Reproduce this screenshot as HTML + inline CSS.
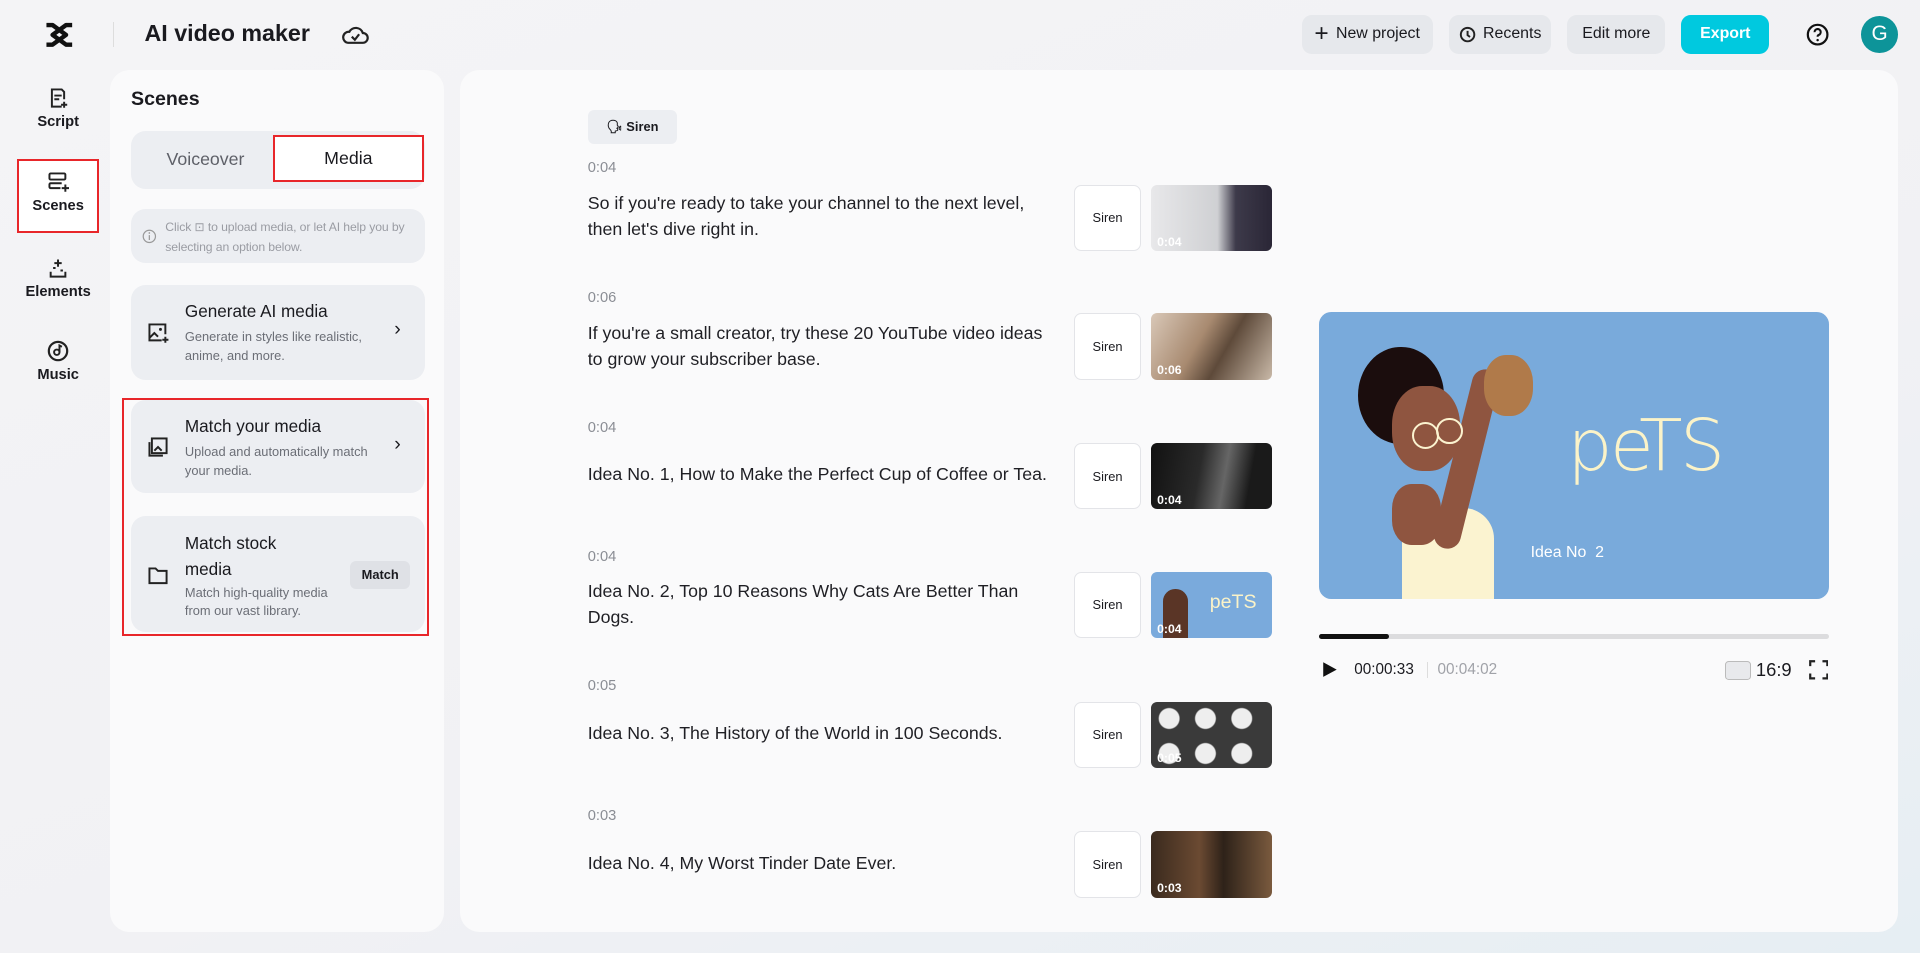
<!DOCTYPE html>
<html><head><meta charset="utf-8"><style>
*{box-sizing:border-box;margin:0;padding:0}
html,body{width:1920px;height:953px;overflow:hidden}
body{font-family:"Liberation Sans",sans-serif;background:linear-gradient(160deg,#f4f4f6 0%,#f1f1f4 60%,#e6eef3 100%);color:#1a1a1f}
#w{zoom:1.22449;width:1568px;height:778px;position:relative}
.a{position:absolute}
.btn{position:absolute;top:12px;height:32px;border-radius:8px;background:#e6e8ec;font-size:13px;display:flex;align-items:center;justify-content:center;gap:6px;color:#1a1a1f}
.nav{position:absolute;left:14px;width:67px;text-align:center;font-size:12px;font-weight:bold}
.nav svg{display:block;margin:0 auto 4px}
.card{position:absolute;left:107px;width:240px;background:#eceef2;border-radius:12px}
.ct{position:absolute;left:44px;font-size:14px;color:#1a1a1f}
.cs{position:absolute;left:44px;font-size:10.5px;color:#6b6e76;line-height:15px}
.time{position:absolute;left:480px;font-size:12px;color:#8a8d94}
.txt{position:absolute;left:480px;font-size:14.5px;line-height:21px;color:#1f1f24;width:380px}
.sir{position:absolute;left:877px;width:55px;height:54px;border:1px solid #e3e4e8;border-radius:6px;background:#fff;font-size:10.5px;display:flex;align-items:center;justify-content:center}
.th{position:absolute;left:940px;width:99px;height:54px;border-radius:5px;overflow:hidden}
.th span{position:absolute;left:5px;bottom:2px;color:#fff;font-size:10px;font-weight:bold}
</style></head><body><div id="w">
<!-- header -->
<svg class="a" style="left:36px;top:18px" width="25" height="21" viewBox="0 0 25 21"><path d="M2 2.5h5l11 8 -11 8H2M23 2.5h-5L7 10.5l11 8h5" fill="none" stroke="#111" stroke-width="3.6" stroke-linejoin="round"/></svg>
<div class="a" style="left:92px;top:18px;width:1px;height:20px;background:#ddd"></div>
<div class="a" style="left:118px;top:16px;font-size:19px;font-weight:bold">AI video maker</div>
<svg class="a" style="left:279px;top:18px" width="22" height="20" viewBox="0 0 22 20"><path d="M5 17h12a4 4 0 0 0 0-8 6 6 0 0 0-11-1 4.5 4.5 0 0 0-1 9z" fill="none" stroke="#222" stroke-width="1.8"/><path d="M8 12l2.5 2.5L14 10" fill="none" stroke="#222" stroke-width="1.8"/></svg>
<div class="btn" style="left:1063px;width:107px"><span style="font-size:20px">+</span>New project</div>
<div class="btn" style="left:1183px;width:84px"><svg width="14" height="14" viewBox="0 0 14 14"><circle cx="7" cy="7" r="5.5" fill="none" stroke="#222" stroke-width="1.6"/><path d="M7 4v3.5l2 1.5" fill="none" stroke="#222" stroke-width="1.6"/></svg>Recents</div>
<div class="btn" style="left:1280px;width:80px">Edit more</div>
<div class="btn" style="left:1373px;width:72px;background:#00c9df;color:#fff;font-weight:bold">Export</div>
<svg class="a" style="left:1475px;top:19px" width="19" height="19" viewBox="0 0 19 19"><circle cx="9.5" cy="9.5" r="8" fill="none" stroke="#111" stroke-width="1.8"/><path d="M7 7.5a2.5 2.5 0 1 1 3.3 2.3c-.6.3-.8.7-.8 1.4" fill="none" stroke="#111" stroke-width="1.7"/><circle cx="9.5" cy="14" r="1" fill="#111"/></svg>
<div class="a" style="left:1520px;top:13px;width:30px;height:30px;border-radius:50%;background:#0d9499;color:#fff;font-size:17px;display:flex;align-items:center;justify-content:center">G</div>
<!-- left nav -->
<div class="nav" style="top:71px"><svg width="18" height="18" viewBox="0 0 18 18"><path d="M12 16H4V2h8l2 2v6M6 7h6M6 10h4" fill="none" stroke="#222" stroke-width="1.6"/><path d="M14 12v5M11.5 14.5h5" stroke="#222" stroke-width="1.6"/></svg>Script</div>
<div class="a" style="left:14px;top:130px;width:67px;height:60px;border:2px solid #e8262a;background:#fff"></div>
<div class="nav" style="top:140px"><svg width="18" height="18" viewBox="0 0 18 18"><rect x="2" y="2" width="13" height="5" rx="1" fill="none" stroke="#222" stroke-width="1.6"/><path d="M11 14H3a1 1 0 0 1-1-1v-2a1 1 0 0 1 1-1h9M15 11v6M12 14h6" fill="none" stroke="#222" stroke-width="1.6"/></svg>Scenes</div>
<div class="nav" style="top:210px"><svg width="18" height="18" viewBox="0 0 18 18"><path d="M3 12v4h12v-4M9 2v6M6 5h6M5 9h2M11 11h2" fill="none" stroke="#222" stroke-width="1.6"/></svg>Elements</div>
<div class="nav" style="top:278px"><svg width="18" height="18" viewBox="0 0 18 18"><circle cx="9" cy="9" r="7.5" fill="none" stroke="#222" stroke-width="1.8"/><circle cx="8" cy="10" r="2.2" fill="none" stroke="#222" stroke-width="1.6"/><path d="M10.2 10V4.5l2 1" fill="none" stroke="#222" stroke-width="1.6"/></svg>Music</div>
<!-- scenes panel -->
<div class="a" style="left:90px;top:57px;width:273px;height:704px;background:#fafafb;border-radius:16px"></div>
<div class="a" style="left:107px;top:72px;font-size:16px;font-weight:bold">Scenes</div>
<div class="a" style="left:107px;top:107px;width:240px;height:47px;background:#eceef2;border-radius:12px"></div>
<div class="a" style="left:136px;top:122px;font-size:14.5px;color:#5e6068">Voiceover</div>
<div class="a" style="left:223px;top:110px;width:123px;height:39px;background:#fff;border:2px solid #e8262a;font-size:14.5px;display:flex;align-items:center;justify-content:center">Media</div>
<div class="card" style="top:171px;height:44px"></div>
<svg class="a" style="left:116px;top:187px" width="12" height="12" viewBox="0 0 12 12"><circle cx="6" cy="6" r="5" fill="none" stroke="#999" stroke-width="1"/><path d="M6 5v4" stroke="#999"/><circle cx="6" cy="3.3" r=".7" fill="#999"/></svg>
<div class="a" style="left:135px;top:178px;font-size:10px;color:#9a9ca3;line-height:16px;width:212px;letter-spacing:-0.1px">Click ⊡ to upload media, or let AI help you by selecting an option below.</div>
<div class="card" style="top:233px;height:77px"><svg class="a" style="left:13px;top:30px" width="18" height="18" viewBox="0 0 18 18"><path d="M12 15H2V2h13v8" fill="none" stroke="#222" stroke-width="1.6"/><path d="M2 13l4-4 3 3" fill="none" stroke="#222" stroke-width="1.6"/><circle cx="11" cy="6" r="1.2" fill="#222"/><path d="M15 12v5M12.5 14.5h5" stroke="#222" stroke-width="1.6"/></svg><div class="ct" style="top:13px">Generate AI media</div><div class="cs" style="top:35px">Generate in styles like realistic,<br>anime, and more.</div><div class="a" style="left:215px;top:27px;font-size:16px">›</div></div>
<div class="card" style="top:327px;height:76px"><svg class="a" style="left:13px;top:29px" width="18" height="18" viewBox="0 0 18 18"><rect x="4" y="2" width="12" height="12" fill="none" stroke="#222" stroke-width="1.6"/><path d="M2 5v11h11M6 12l3-3 3 3" fill="none" stroke="#222" stroke-width="1.6"/></svg><div class="ct" style="top:13px">Match your media</div><div class="cs" style="top:35px">Upload and automatically match<br>your media.</div><div class="a" style="left:215px;top:27px;font-size:16px">›</div></div>
<div class="card" style="top:421px;height:95px"><svg class="a" style="left:13px;top:41px" width="18" height="16" viewBox="0 0 18 16"><path d="M2 2h5l2 2h7v10H2z" fill="none" stroke="#222" stroke-width="1.6"/></svg><div class="ct" style="top:13px;line-height:21px">Match stock<br>media</div><div class="cs" style="top:56px">Match high-quality media<br>from our vast library.</div><div class="a" style="left:179px;top:37px;width:49px;height:23px;background:#dfe1e6;border-radius:5px;font-size:10.5px;font-weight:bold;display:flex;align-items:center;justify-content:center">Match</div></div>
<div class="a" style="left:100px;top:325px;width:250px;height:194px;border:2px solid #e8262a"></div>
<!-- main -->
<div class="a" style="left:376px;top:57px;width:1174px;height:704px;background:#fafafb;border-radius:16px"></div>
<div class="a" style="left:480px;top:90px;width:73px;height:28px;background:#eceef2;border-radius:5px;font-size:10.5px;font-weight:bold;display:flex;align-items:center;justify-content:center;gap:3px">🗣︎ Siren</div>

<div class="time" style="top:131px">0:04</div><div class="txt" style="top:156px">So if you're ready to take your channel to the next level, then let's dive right in.</div>
<div class="sir" style="top:151px">Siren</div><div class="th" style="top:151px;background:linear-gradient(90deg,#e8e8ea 0%,#cfd0d3 55%,#3d3a4a 70%,#2a2636 100%)"><span>0:04</span></div>

<div class="time" style="top:237px">0:06</div><div class="txt" style="top:262px">If you're a small creator, try these 20 YouTube video ideas to grow your subscriber base.</div>
<div class="sir" style="top:256px">Siren</div><div class="th" style="top:256px;background:linear-gradient(120deg,#d9c8b8,#a88a70 40%,#5e4a3a 60%,#c9b9a8)"><span>0:06</span></div>

<div class="time" style="top:343px">0:04</div><div class="txt" style="top:377px">Idea No. 1, How to Make the Perfect Cup of Coffee or Tea.</div>
<div class="sir" style="top:362px">Siren</div><div class="th" style="top:362px;background:linear-gradient(100deg,#111 0%,#2a2a2a 40%,#666 60%,#1a1a1a 80%)"><span>0:04</span></div>

<div class="time" style="top:448px">0:04</div><div class="txt" style="top:473px">Idea No. 2, Top 10 Reasons Why Cats Are Better Than Dogs.</div>
<div class="sir" style="top:467px">Siren</div><div class="th" style="top:467px;background:#7aaadc"><div class="a" style="left:10px;top:14px;width:20px;height:40px;background:#5a3526;border-radius:10px 10px 0 0"></div><div class="a" style="left:48px;top:16px;color:#fbf3c8;font-size:16px">peTS</div><span>0:04</span></div>

<div class="time" style="top:554px">0:05</div><div class="txt" style="top:589px">Idea No. 3, The History of the World in 100 Seconds.</div>
<div class="sir" style="top:573px">Siren</div><div class="th" style="top:573px;background:radial-gradient(circle at 15% 25%,#eee 8px,transparent 9px),radial-gradient(circle at 45% 25%,#eee 8px,transparent 9px),radial-gradient(circle at 75% 25%,#eee 8px,transparent 9px),radial-gradient(circle at 15% 78%,#eee 8px,transparent 9px),radial-gradient(circle at 45% 78%,#eee 8px,transparent 9px),radial-gradient(circle at 75% 78%,#eee 8px,transparent 9px),#3a3a3a"><span>0:05</span></div>

<div class="time" style="top:660px">0:03</div><div class="txt" style="top:695px">Idea No. 4, My Worst Tinder Date Ever.</div>
<div class="sir" style="top:679px">Siren</div><div class="th" style="top:679px;background:linear-gradient(90deg,#3a2a1e,#6b4a32 40%,#2e2219 60%,#7a5a3e)"><span>0:03</span></div>

<!-- preview -->
<div class="a" style="left:1077px;top:255px;width:417px;height:234px;background:#79aadb;border-radius:10px;overflow:hidden">
<div class="a" style="left:68px;top:160px;width:75px;height:90px;background:#fbf3d0;border-radius:25px 25px 0 0"></div>
<div class="a" style="left:60px;top:140px;width:40px;height:50px;background:#8f5540;border-radius:40%"></div>
<div class="a" style="left:110px;top:45px;width:22px;height:150px;background:#8f5540;transform:rotate(14deg);border-radius:11px"></div>
<div class="a" style="left:32px;top:28px;width:70px;height:80px;background:#1b0d0d;border-radius:50%"></div>
<div class="a" style="left:60px;top:60px;width:55px;height:70px;background:#8f5540;border-radius:45%"></div>
<div class="a" style="left:76px;top:90px;width:22px;height:22px;border:2px solid #fbf3d0;border-radius:50%"></div>
<div class="a" style="left:96px;top:86px;width:22px;height:22px;border:2px solid #fbf3d0;border-radius:50%"></div>
<div class="a" style="left:135px;top:35px;width:40px;height:50px;background:#b07a4a;border-radius:45%"></div>
<div class="a" style="left:203px;top:75px;color:#fbf3c8;font-size:58px;font-family:'DejaVu Sans',sans-serif;font-weight:200;letter-spacing:-2px">peTS</div>
<div class="a" style="left:173px;top:189px;color:#fff;font-size:13px">Idea No&nbsp; 2</div>
</div>
<div class="a" style="left:1077px;top:518px;width:417px;height:4px;background:#dcdcde;border-radius:2px"></div>
<div class="a" style="left:1077px;top:518px;width:57px;height:4px;background:#111;border-radius:2px"></div>
<svg class="a" style="left:1080px;top:540px" width="12" height="14" viewBox="0 0 12 14"><path d="M1 1l11 6-11 6z" fill="#111"/></svg>
<div class="a" style="left:1106px;top:540px;font-size:12.5px">00:00:33</div>
<div class="a" style="left:1165px;top:541px;width:1px;height:13px;background:#ddd"></div>
<div class="a" style="left:1174px;top:540px;font-size:12.5px;color:#a0a2a8">00:04:02</div>
<div class="a" style="left:1409px;top:540px;width:21px;height:15px;border:1px solid #bbb;background:#e8e9ec;border-radius:3px"></div>
<div class="a" style="left:1434px;top:538px;font-size:15px">16:9</div>
<svg class="a" style="left:1477px;top:539px" width="16" height="16" viewBox="0 0 16 16"><path d="M1 5V1h4M11 1h4v4M15 11v4h-4M5 15H1v-4" fill="none" stroke="#222" stroke-width="1.8"/></svg>
</div></body></html>
